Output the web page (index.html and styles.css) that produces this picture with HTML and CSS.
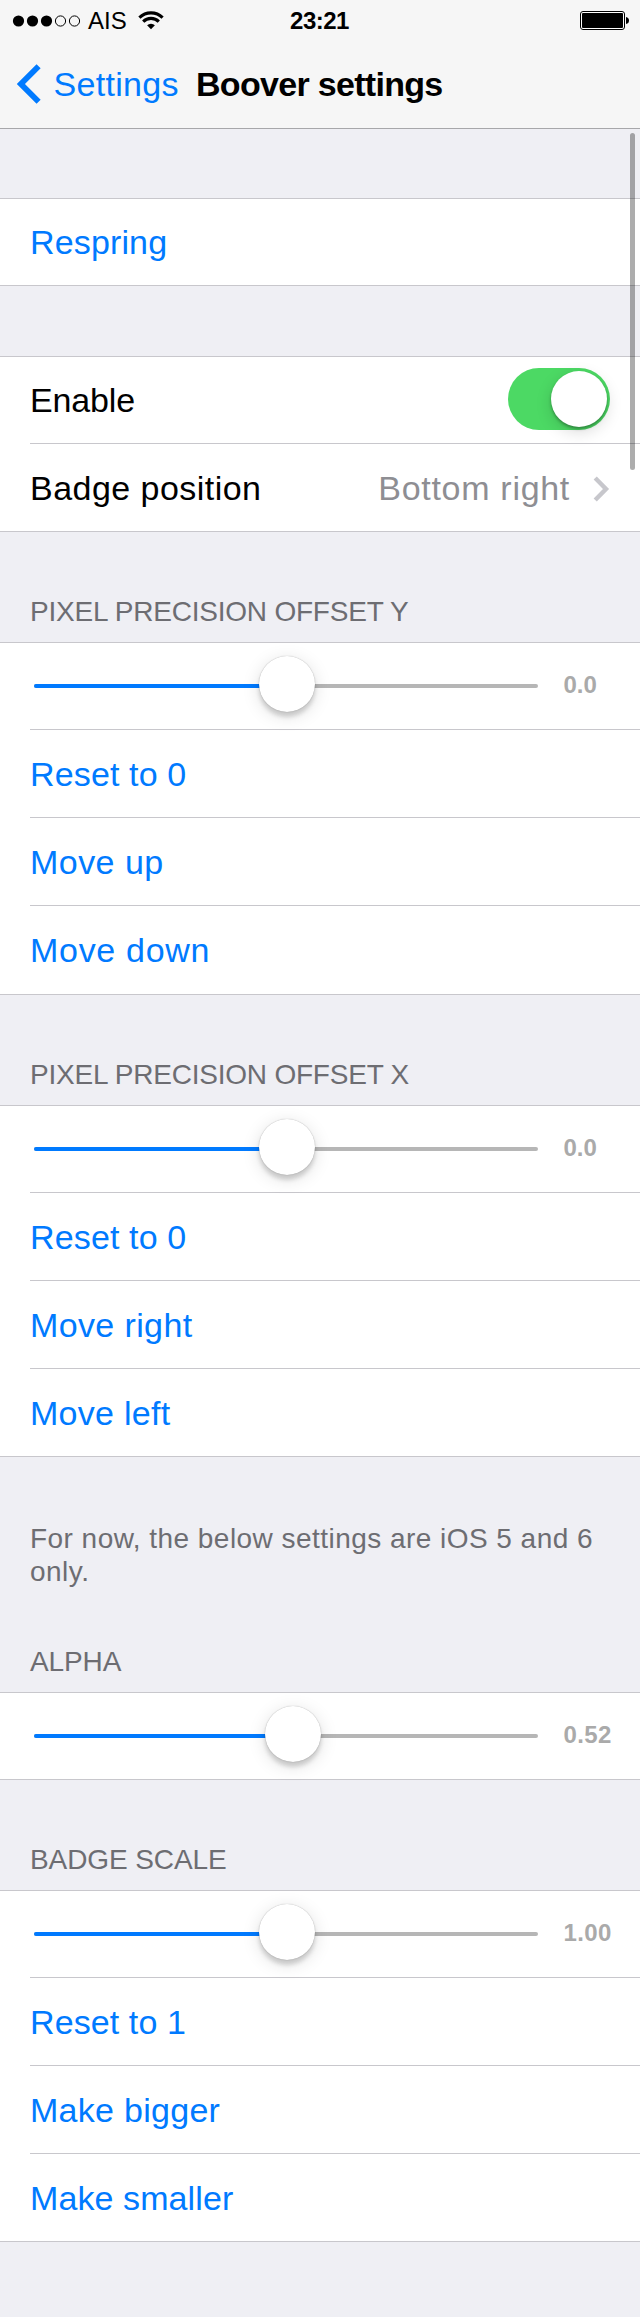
FILE: index.html
```html
<!DOCTYPE html>
<html lang="en">
<head>
<meta charset="utf-8">
<title>Boover settings</title>
<link rel="stylesheet" href="styles.css">
</head>
<body>
<header class="top">
  <div class="status">
    <div class="carrier">
      <svg class="signal" width="70" height="12" viewBox="0 0 70 12">
        <circle cx="6.5" cy="6" r="5.6"/><circle cx="20.5" cy="6" r="5.6"/><circle cx="34.5" cy="6" r="5.6"/>
        <circle class="hollow" cx="48.5" cy="6" r="5.1"/><circle class="hollow" cx="62.5" cy="6" r="5.1"/>
      </svg>
      <span class="operator">AIS</span>
      <svg class="wifi" width="26" height="19" viewBox="0 0 26 19">
        <path d="M13 18.2 L9.1 14.3 A5.6 5.6 0 0 1 16.9 14.3 Z"/>
        <path class="arc" d="M5.2 10.6 A11 11 0 0 1 20.8 10.6"/>
        <path class="arc" d="M1.4 6.6 A16.6 16.6 0 0 1 24.6 6.6"/>
      </svg>
    </div>
    <span class="clock">23:21</span>
    <svg class="battery" width="50" height="20" viewBox="0 0 50 20">
      <rect class="shell" x="0.5" y="1.5" width="44" height="18" rx="2.5"/>
      <rect x="2" y="3" width="41" height="15" rx="1"/>
      <path d="M46 7 Q49 7.5 49 10.5 Q49 13.5 46 14 Z"/>
    </svg>
  </div>
  <nav class="navbar">
    <svg class="back" width="26" height="42" viewBox="0 0 26 42"><path d="M22.6 3.3 L4.9 21 L22.6 38.7"/></svg>
    <span class="parent">Settings</span>
    <h1 class="title">Boover settings</h1>
  </nav>
</header>
<main class="page">
  <section class="group first">
    <div class="row link"><span class="s2">Respring</span></div>
  </section>
  <section class="group second">
    <div class="row"><span class="s0">Enable</span><span class="toggle"><span class="knob"></span></span></div>
    <div class="row"><span class="s5">Badge position</span>
      <span class="value s7">Bottom right</span>
      <svg class="more" width="18" height="26" viewBox="0 0 18 26"><path d="M3.2 2 L14 13 L3.2 24"/></svg>
    </div>
  </section>
  <h2 class="heading">PIXEL PRECISION OFFSET Y</h2>
  <section class="group tall">
    <div class="row slider"><div class="track"><div class="fill"></div><div class="thumb"></div></div><span class="number">0.0</span></div>
    <div class="row link"><span class="s2">Reset to 0</span></div>
    <div class="row link"><span class="s5">Move up</span></div>
    <div class="row link"><span class="s7">Move down</span></div>
  </section>
  <h2 class="heading">PIXEL PRECISION OFFSET X</h2>
  <section class="group">
    <div class="row slider"><div class="track"><div class="fill"></div><div class="thumb"></div></div><span class="number">0.0</span></div>
    <div class="row link"><span class="s2">Reset to 0</span></div>
    <div class="row link"><span class="s4">Move right</span></div>
    <div class="row link"><span class="s3">Move left</span></div>
  </section>
  <p class="note">For now, the below settings are iOS 5 and 6 only.</p>
  <h2 class="heading short">ALPHA</h2>
  <section class="group">
    <div class="row slider"><div class="track alpha"><div class="fill"></div><div class="thumb"></div></div><span class="number wide">0.52</span></div>
  </section>
  <h2 class="heading short">BADGE SCALE</h2>
  <section class="group">
    <div class="row slider"><div class="track"><div class="fill"></div><div class="thumb"></div></div><span class="number wide">1.00</span></div>
    <div class="row link"><span class="s1">Reset to 1</span></div>
    <div class="row link"><span class="s3">Make bigger</span></div>
    <div class="row link"><span class="s1">Make smaller</span></div>
  </section>
</main>
<div class="scrollbar"></div>
</body>
</html>
```
FILE: styles.css
```css
* { box-sizing: border-box; }
body {
  position: relative;
  margin: 0;
  width: 640px;
  height: 2317px;
  overflow: hidden;
  background: #efeff4;
  color: #000;
  font: 34px/40px "Liberation Sans", Arial, sans-serif;
}
svg { display: block; flex: none; }

/* Status bar and navigation bar */
.top { height: 129px; background: #f6f6f6; border-bottom: 1px solid #a7a7aa; }
.status {
  display: grid;
  grid-template-columns: 1fr auto 1fr;
  height: 40px;
  padding: 0 10px 0 12px;
  font-size: 24px;
  line-height: 41px;
}
.carrier { display: flex; }
.signal { margin-top: 14.5px; }
.hollow { fill: none; stroke: #000; stroke-width: 1; }
.operator { margin-left: 6px; width: 38px; }
.wifi { margin: 10.5px 0 0 12px; }
.arc { fill: none; stroke: #000; stroke-width: 3.1; }
.clock { padding-right: 3px; font-weight: bold; letter-spacing: -0.5px; }
.battery { justify-self: end; margin: 10px 0 0; }
.battery .shell { fill: #fff; stroke: #000; }
.navbar { display: flex; height: 88px; padding: 24px 0 0 16px; }
.back { margin-top: -1px; }
.back path { fill: none; stroke: #007aff; stroke-width: 5.8; }
.parent { width: 142px; padding-left: 11.5px; color: #007aff; letter-spacing: 0.3px; }
.title { margin: 0 0 0 12px; font-size: 34px; letter-spacing: -0.69px; white-space: nowrap; }

/* Grouped table */
.group { background: #fff; border-top: 1px solid #c8c7cc; border-bottom: 1px solid #c8c7cc; }
.first { margin-top: 69px; }
.second { margin-top: 70px; }
.row {
  display: flex;
  height: 88px;
  margin-left: 30px;
  padding: 24px 30px 0 0;
  border-top: 1px solid #c8c7cc;
}
.row:first-child { height: 86px; padding-top: 23px; border-top: 0; }
.tall .row:last-child { height: 89px; }
.link { color: #007aff; }
.value { margin-left: auto; color: #8e8e93; }
.more { margin: 8px 0 0 22px; }
.more path { fill: none; stroke: #c7c7cc; stroke-width: 4.4; }

/* Letter fitting of the labels */
.s0 { letter-spacing: -0.15px; }
.s1 { letter-spacing: 0.1px; }
.s2 { letter-spacing: 0.14px; }
.s3 { letter-spacing: 0.28px; }
.s4 { letter-spacing: 0.38px; }
.s5 { letter-spacing: 0.46px; }
.s7 { letter-spacing: 0.7px; }

.heading {
  height: 110px;
  margin: 0;
  padding: 63px 30px 0;
  color: #6d6d72;
  font-size: 28px;
  font-weight: normal;
  line-height: 34px;
  letter-spacing: -0.22px;
}
.short { letter-spacing: -0.1px; }
.note {
  height: 125px;
  margin: 0;
  padding: 65px 30px 0;
  color: #6d6d72;
  font-size: 28px;
  line-height: 33px;
  letter-spacing: 0.46px;
}

.toggle {
  height: 62px;
  width: 102px;
  margin: -12px 0 0 auto;
  padding: 3px;
  border-radius: 31px;
  background: #4cd964;
}
.knob {
  display: block;
  width: 56px;
  height: 56px;
  margin-left: auto;
  border-radius: 50%;
  background: #fff;
  box-shadow: 0 2px 3px rgba(0, 0, 0, 0.3), 0 5px 16px rgba(0, 0, 0, 0.15);
}

.slider .track {
  --value: 50.2%;
  position: relative;
  flex: none;
  width: 504px;
  height: 4px;
  margin: 18px 0 0 4px;
  border-radius: 2px;
  background: #b6b6b6;
}
.slider .alpha { --value: 51.4%; }
.fill { width: var(--value); height: 4px; border-radius: 2px; background: #007aff; }
.thumb {
  position: absolute;
  left: calc(var(--value) - 28px);
  top: -28px;
  width: 56px;
  height: 56px;
  border-radius: 50%;
  background: #fff;
  box-shadow: 0 0 1px rgba(0, 0, 0, 0.35), 0 5px 4px rgba(0, 0, 0, 0.15), 0 4px 18px rgba(0, 0, 0, 0.13);
}
.number { margin: -1px -10px 0 25.5px; color: #aaa; font-size: 24px; font-weight: bold; }
.wide { letter-spacing: 0.4px; }

.scrollbar {
  position: absolute;
  left: 630px;
  top: 133px;
  width: 5px;
  height: 337px;
  border-radius: 2.5px;
  background: rgba(0, 0, 0, 0.32);
}
```
